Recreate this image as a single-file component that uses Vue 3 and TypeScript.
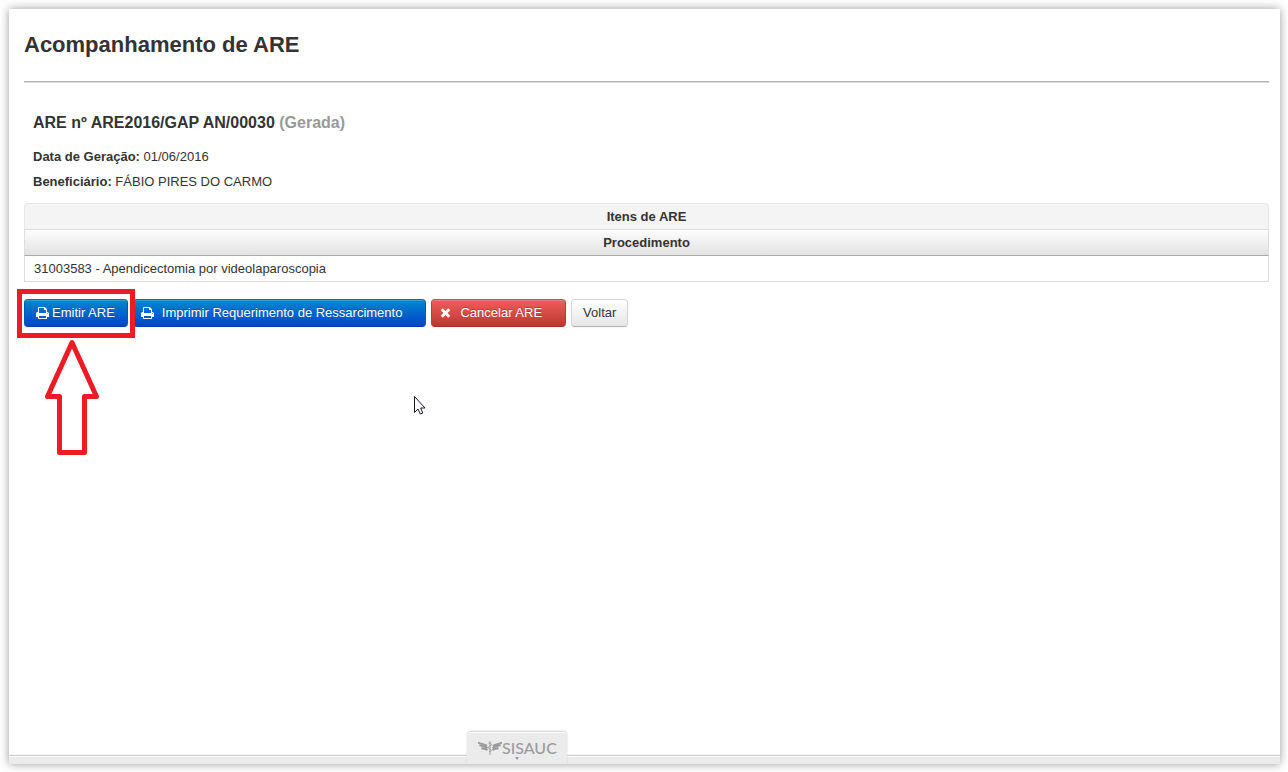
<script setup lang="ts">
interface Item {
  codigo: string
  nome: string
}

const are = {
  numero: 'ARE2016/GAP AN/00030',
  situacao: 'Gerada',
  dataGeracao: '01/06/2016',
  beneficiario: 'FÁBIO PIRES DO CARMO',
}

const itens: Item[] = [{ codigo: '31003583', nome: 'Apendicectomia por videolaparoscopia' }]

const printIcon =
  'M384 1536h896v-256h-896v256zM384 896h896v-384h-160q-40 0-68-28t-28-68v-160h-640v640zM1536 960q0-26-19-45t-45-19-45 19-19 45 19 45 45 19 45-19 19-45zM1664 960v416q0 13-9.5 22.5t-22.5 9.5h-224v160q0 40-28 68t-68 28h-960q-40 0-68-28t-28-68v-160h-224q-13 0-22.5-9.5t-9.5-22.5v-416q0-79 56.5-135.5t135.5-56.5h64v-544q0-40 28-68t68-28h672q40 0 88 20t76 48l152 152q28 28 48 76t20 88v256h64q79 0 135.5 56.5t56.5 135.5z'
const cancelIcon =
  'M1298 1322q0 40-28 68l-136 136q-28 28-68 28t-68-28l-294-294-294 294q-28 28-68 28t-68-28l-136-136q-28-28-28-68t28-68l294-294-294-294q-28-28-28-68t28-68l136-136q28-28 68-28t68 28l294 294 294-294q28-28 68-28t68 28l136 136q28 28 28 68t-28 68l-294 294 294 294q28 28 28 68z'
</script>

<template>
  <div class="page">
    <main class="content">
      <h1>Acompanhamento de ARE</h1>
      <hr />
      <section class="details">
        <h2>ARE nº {{ are.numero }} <span class="status">({{ are.situacao }})</span></h2>
        <p><strong>Data de Geração:</strong> {{ are.dataGeracao }}</p>
        <p><strong>Beneficiário:</strong> {{ are.beneficiario }}</p>
      </section>
      <table>
        <caption>Itens de ARE</caption>
        <thead>
          <tr><th scope="col">Procedimento</th></tr>
        </thead>
        <tbody>
          <tr v-for="item in itens" :key="item.codigo">
            <td>{{ item.codigo }} - {{ item.nome }}</td>
          </tr>
        </tbody>
      </table>
      <div class="actions">
        <button type="button" class="btn primary compact">
          <svg class="icon" viewBox="0 128 1664 1536" aria-hidden="true">
            <path fill="#fff" :d="printIcon" />
          </svg>
          <span>Emitir ARE</span>
        </button>
        <button type="button" class="btn primary wide">
          <svg class="icon" viewBox="0 128 1664 1536" aria-hidden="true">
            <path fill="#fff" :d="printIcon" />
          </svg>
          <span>Imprimir Requerimento de Ressarcimento</span>
        </button>
        <button type="button" class="btn danger wide">
          <svg class="icon" viewBox="-154 168 1716 1584" aria-hidden="true">
            <path fill="#fff" :d="cancelIcon" />
          </svg>
          <span>Cancelar ARE</span>
        </button>
        <button type="button" class="btn plain">Voltar</button>
        <div class="highlight" aria-hidden="true"></div>
        <svg class="arrow" viewBox="0 0 54 116" aria-hidden="true">
          <path fill="none" stroke="#ed1c24" stroke-width="5" stroke-linejoin="round" d="M27 3.500L2.500 57.500h12v56h25v-56h12z" />
        </svg>
        <svg class="cursor" viewBox="0 0 13 20" aria-hidden="true">
          <path fill="#fff" stroke="#171729" d="M1.500 1.500v16l3.500-3.500 2.300 5 2.500-1-2.200-5H12z" />
        </svg>
      </div>
    </main>
    <footer>
      <div class="brand">
        <svg class="wings" viewBox="0 0 24 16" aria-hidden="true">
          <g fill="none" stroke="#9c9c9c">
            <path stroke-width="2" d="M0 2.500c3 2 6 1 9 3.500M1.500 5c3 1.500 5 .5 8 3M3.500 8c2 1 4 .5 6 2M24 2.500c-3 2-6 1-9 3.500M22.500 5c-3 1.500-5 .5-8 3M20.500 8c-2 1-4 .5-6 2" />
            <path d="M12 1v14M10.500 3c4 1 4 2 1.500 3s-2 2.500 0 3 2 2-1 3" />
          </g>
        </svg>
        <span>SISAUC</span>
        <i class="caret"></i>
      </div>
    </footer>
  </div>
</template>

<style>
body {
  margin: 0;
  background: #fff;
}
</style>

<style scoped>
.page {
  box-sizing: border-box;
  display: flex;
  flex-direction: column;
  min-height: calc(100vh - 17px);
  margin: 9px 8px 8px 9px;
  background: #fff;
  box-shadow: 0 0 9px rgba(0, 0, 0, 0.4);
  color: #333;
  font: 13px/25px "Liberation Sans", Arial, sans-serif;
}
.content {
  flex: 1;
  padding: 21px 11px 0 15px;
}
h1 {
  margin: 0;
  font-size: 22px;
  line-height: 30px;
}
hr {
  height: 1px;
  margin: 21px 0 27px;
  border: 0;
  background: #b2b2b2;
  box-shadow: 0 1px 0 #ddd;
}
.details {
  padding: 0 9px;
}
h2 {
  margin: 0 0 7px;
  font-size: 16px;
  line-height: 28px;
}
.status {
  color: #999;
}
p {
  margin: 0;
}
table {
  width: 100%;
  margin-top: 9px;
  border-collapse: separate;
  border-spacing: 0;
}
caption {
  box-sizing: border-box;
  height: 26px;
  border: 1px solid #e8e8e8;
  border-bottom: 0;
  border-radius: 4px 4px 0 0;
  background: #f4f4f4;
  font-weight: bold;
}
th,
td {
  box-sizing: border-box;
  height: 26px;
  padding: 0 9px;
  border: solid #ddd;
  line-height: 24px;
}
th {
  border-width: 1px 1px 0;
  background: linear-gradient(#fdfdfd, #e2e2e2);
}
td {
  height: 27px;
  border-width: 1px;
  border-top-color: #aaa;
}
.actions {
  position: relative;
  display: flex;
  gap: 5px;
  margin-top: 17px;
}
.btn {
  box-sizing: border-box;
  display: flex;
  align-items: center;
  height: 28px;
  padding: 0 11px 2px;
  border: 1px solid;
  border-radius: 4px;
  color: #fff;
  font: inherit;
  white-space: nowrap;
  text-shadow: 0 -1px 0 rgba(0, 0, 0, 0.25);
  box-shadow: inset 0 1px 0 rgba(255, 255, 255, 0.2), 0 1px 2px rgba(0, 0, 0, 0.05);
}
.icon {
  flex: none;
  width: 13px;
  height: 12px;
}
.compact {
  gap: 3px;
  padding: 0 12px 1px 11px;
}
.wide {
  gap: 8px;
  padding: 0 23px 1px 7px;
}
.primary {
  border-color: #0074b0 #0058b8 #003bb3;
  background: linear-gradient(#0088cc, #0044cc);
}
.danger {
  border-color: #cb4f4b #bd3e39 #a9302a;
  background: linear-gradient(#ee5f5b, #bd362f);
}
.plain {
  border-color: #d5d5d5 #d5d5d5 #b3b3b3;
  background: linear-gradient(#fff, #e6e6e6);
  color: #333;
  text-shadow: 0 1px 1px rgba(255, 255, 255, 0.75);
}
.highlight {
  position: absolute;
  top: -10px;
  left: -7px;
  box-sizing: border-box;
  width: 118px;
  height: 49px;
  border: 5px solid #ed1c24;
}
.arrow {
  position: absolute;
  top: 40px;
  left: 21px;
  width: 54px;
  height: 116px;
}
.cursor {
  position: absolute;
  top: 96px;
  left: 389px;
  width: 13px;
  height: 20px;
}
footer {
  position: relative;
  height: 7px;
  border-top: 1px solid #fff;
  background: #ebebeb;
  box-shadow: 0 -1px 1px #ccc;
}
.brand {
  position: absolute;
  bottom: 0;
  left: 40%;
  display: flex;
  align-items: center;
  justify-content: center;
  box-sizing: border-box;
  width: 100px;
  height: 32px;
  margin-left: -50px;
  padding-bottom: 2px;
  border-top: 1px solid #fff;
  border-radius: 4px 4px 0 0;
  background: #ebebeb;
  box-shadow: 0 -1px 2px #ccc;
  clip-path: inset(-4px -4px 0);
  color: #9c9c9c;
  font: 500 16px/20px Lato, sans-serif;
}
.wings {
  width: 24px;
  height: 16px;
}
.caret {
  position: absolute;
  bottom: 4px;
  left: 48px;
  border: solid transparent;
  border-width: 3px 2px 0;
  border-top-color: #999;
}
</style>
